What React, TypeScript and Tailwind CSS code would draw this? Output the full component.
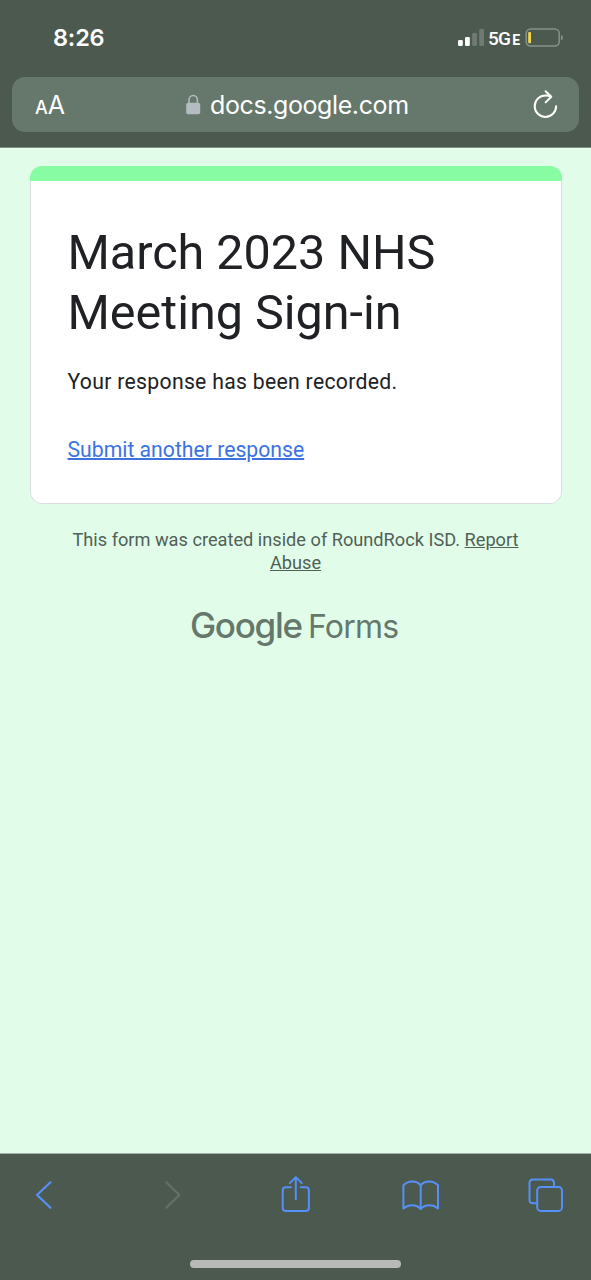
import type { ReactNode } from 'react'

const TABS: { name: string; color: string; icon: ReactNode }[] = [
  { name: 'Back', color: 'text-[#5690f6]', icon: <path d="M26.5 7.3L13 20l13.5 12.8" strokeWidth="2.2" /> },
  { name: 'Forward', color: 'text-[#64716a]', icon: <path d="M17.2 7.3L30.5 20 17.2 32.8" strokeWidth="2.2" /> },
  {
    name: 'Share',
    color: 'text-[#5690f6]',
    icon: (
      <>
        <path d="M16 12.2h-5q-3.3 0-3.3 3.3v17.3q0 3.3 3.3 3.3h19.6q3.3 0 3.3-3.3V15.5q0-3.3-3.3-3.3h-5" />
        <path d="M20.8 24.3v-22M14.8 8.1l6-6 6 6" />
      </>
    ),
  },
  {
    name: 'Bookmarks',
    color: 'text-[#5690f6]',
    icon: (
      <>
        <path d="M20.7 10.3C16.5 5.2 8.5 5.5 3.4 10.2v23.3c5.1-4.3 13.1-4.3 17.3.5 4.3-4.8 12.3-4.8 17.3-.5V10.2C33 5.5 25 5.2 20.7 10.3z" />
        <path d="M20.7 10.3V34" />
      </>
    ),
  },
  {
    name: 'Tabs',
    color: 'text-[#5690f6]',
    icon: (
      <>
        <path d="M11.5 28.3H8q-3.5 0-3.5-3.5V8q0-3.5 3.5-3.5h17.5q3.5 0 3.5 3.5v3.5" />
        <rect x="12.2" y="11.9" width="24.8" height="24" rx="3.5" />
      </>
    ),
  },
]

function StatusBar() {
  return (
    <div className="flex h-[77px] items-start justify-between pt-[23px] pr-[27px] pl-[53px] text-white">
      <span className="font-['Inter',sans-serif] text-[23.5px] leading-[30px] font-semibold tracking-[-0.2px]">8:26</span>
      <div className="flex h-[30px] items-center">
        <svg width="26" height="30" viewBox="0 0 26 30" fill="currentColor">
          <rect x="0" y="17" width="4.8" height="6" rx="1.2" />
          <rect x="7" y="14" width="4.8" height="9" rx="1.2" />
          <rect x="14.2" y="10" width="4.8" height="13" rx="1.2" opacity="0.2" />
          <rect x="21.2" y="6" width="4.8" height="17" rx="1.2" opacity="0.2" />
        </svg>
        <span className="ml-[4px] flex w-[32px] items-baseline justify-between pt-[3px] font-['Roboto',sans-serif] leading-[30px] font-medium">
          <span className="text-[19px] tracking-[-0.8px]">5G</span>
          <span className="text-[14px] font-bold">E</span>
        </span>
        <svg className="ml-[5px]" width="39" height="30" viewBox="0 0 39 30" fill="none">
          <rect x="1.2" y="5.9" width="33" height="17.2" rx="4.5" stroke="#87928b" strokeWidth="1.5" />
          <path d="M36 12v5.5c2.6-1 2.6-4.5 0-5.5z" fill="#87928b" />
          <rect x="3.2" y="9" width="2.8" height="11.3" rx="1" fill="#f8d64a" />
        </svg>
      </div>
    </div>
  )
}

function AddressBar() {
  return (
    <div className="mx-3 flex h-[55px] items-center rounded-[13px] bg-[#66776b] pr-[19px] pl-[23px] text-white">
      <span className="flex w-[151px] items-baseline pt-[2px] font-['Inter',sans-serif]">
        <span className="text-[18px] font-medium">A</span>
        <span className="text-[25px]">A</span>
      </span>
      <svg width="15" height="21" viewBox="0 0 15 21" fill="none">
        <rect x="0.2" y="8.7" width="14" height="11.5" rx="2" fill="#b4bcc1" />
        <path d="M3 9V6a4.2 4.6 0 018.4 0V9" stroke="#b4bcc1" strokeWidth="1.5" />
      </svg>
      <span className="ml-[9px] pt-[2px] font-['Inter',sans-serif] text-[25px] tracking-[-0.4px] whitespace-nowrap">docs.google.com</span>
      <svg className="ml-auto" width="28" height="32" viewBox="0 0 28 32" fill="none" stroke="currentColor" strokeWidth="2" strokeLinecap="round" strokeLinejoin="round">
        <path d="M19 7.8C17.5 6.8 15 6.5 13.4 6.5A10.7 10.7 0 1 0 24.1 17.2" />
        <path d="M13.6 2.2l5.7 5.6-5.7 5.6" />
      </svg>
    </div>
  )
}

function ResponseCard() {
  return (
    <section className="mt-[18px] mr-[29.5px] ml-[30px] overflow-hidden rounded-[12px]">
      <div className="h-[15px] bg-[#87fca2]" />
      <div className="h-[323px] rounded-b-[12px] border border-t-0 border-[#d9dce0] bg-white px-[36.5px] pt-[41.5px] text-[#202124]">
        <h1 className="text-[48.5px] leading-[60.6px]">March 2023 NHS Meeting Sign-in</h1>
        <p className="mt-[23px] text-[21.2px] leading-[30.3px] tracking-[0.3px]">Your response has been recorded.</p>
        <p className="mt-[38px] text-[21.2px] leading-[30.3px]">
          <a href="#" className="text-[#3b73e3] underline decoration-[1.5px]">Submit another response</a>
        </p>
      </div>
    </section>
  )
}

export default function App() {
  return (
    <div className="flex h-[1280px] w-[591px] flex-col overflow-hidden bg-[#e1fdea] font-['Roboto',sans-serif]">
      <header className="h-[148px] shrink-0 border-b border-[#7f9085] bg-[#4c594f]">
        <StatusBar />
        <AddressBar />
      </header>

      <main className="flex-1">
        <ResponseCard />
        <p className="mx-[60px] mt-[24px] text-center text-[18.2px] leading-[23px] text-[#525f57]">
          This form was created inside of RoundRock ISD.{' '}
          <a href="#" className="underline">Report Abuse</a>
        </p>
        <div className="mt-[30px] ml-[190px] flex items-baseline font-['Inter',sans-serif] leading-[42px] text-[#66776c]">
          <span className="w-[118px] text-[35px] font-medium tracking-[-1.3px]">Google</span>
          <span className="text-[32px] tracking-[-0.8px]">Forms</span>
        </div>
      </main>

      <footer className="h-[127px] shrink-0 border-t border-[#a3b5a9] bg-[#4c594f]">
        <nav className="flex justify-between pt-[21px] pr-[26px] pl-6">
          {TABS.map((tab) => (
            <button key={tab.name} aria-label={tab.name} className={tab.color}>
              <svg width="40" height="40" viewBox="0 0 40 40" fill="none" stroke="currentColor" strokeWidth="2" strokeLinecap="round" strokeLinejoin="round">
                {tab.icon}
              </svg>
            </button>
          ))}
        </nav>
        <div className="mx-auto mt-[45px] h-[8px] w-[211px] rounded-full bg-[#b9b9b9]" />
      </footer>
    </div>
  )
}
